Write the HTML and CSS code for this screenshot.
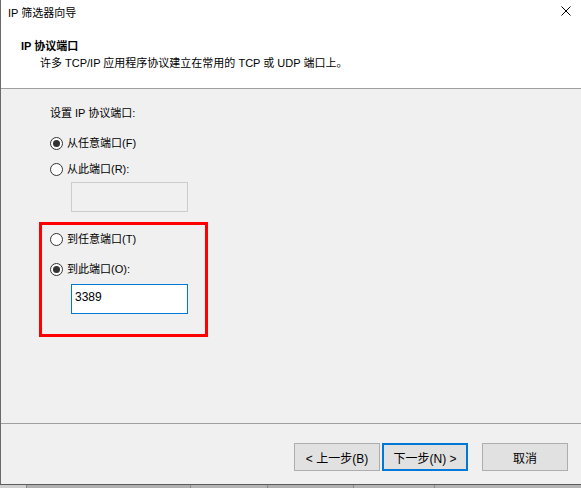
FILE: index.html
```html
<!DOCTYPE html>
<html lang="zh-CN">
<head>
<meta charset="utf-8">
<title>IP 筛选器向导</title>
<link rel="stylesheet" href="styles.css">
</head>
<body>
<div class="window">
  <div class="header">
    <div class="titlebar">
      <span class="title">IP 筛选器向导</span>
      <svg class="close" width="10" height="10" viewBox="0 0 10 10"><path d="M0.5 0.5L9.5 9.5M9.5 0.5L0.5 9.5" stroke="#000" stroke-width="1"/></svg>
    </div>
    <div class="hdr-title">IP 协议端口</div>
    <div class="hdr-sub">许多 TCP/IP 应用程序协议建立在常用的 TCP 或 UDP 端口上。</div>
  </div>
  <div class="content">
    <div class="label">设置 IP 协议端口:</div>
    <div class="radio-row r1"><span class="radio checked"></span><span>从任意端口(F)</span></div>
    <div class="radio-row r2"><span class="radio"></span><span>从此端口(R):</span></div>
    <div class="input disabled"></div>
    <div class="highlight">
      <div class="radio-row r3"><span class="radio"></span><span>到任意端口(T)</span></div>
      <div class="radio-row r4"><span class="radio checked"></span><span>到此端口(O):</span></div>
      <div class="input active">3389</div>
    </div>
  </div>
  <div class="footer">
    <button class="btn">&lt; 上一步(B)</button>
    <button class="btn primary">下一步(N) &gt;</button>
    <button class="btn cancel">取消</button>
  </div>
</div>
<div class="below">
  <span class="seg s1"></span><span class="seg s2"></span><span class="seg s3"></span><span class="seg s4"></span><span class="seg s5"></span>
</div>
</body>
</html>
```
FILE: styles.css
```css
html, body {
  margin: 0;
  padding: 0;
}
body {
  width: 581px;
  height: 488px;
  overflow: hidden;
  background: #b4b4b4;
  font-family: "Liberation Sans", "Noto Sans CJK SC", sans-serif;
  font-size: 11px;
  line-height: 16px;
  color: #000;
}
.window {
  width: 580px;
  height: 484px;
  border-left: 1px solid #6a6a6a;
  border-bottom: 1px solid #5c5c5c;
  display: flex;
  flex-direction: column;
  background: #f0f0f0;
}
.header {
  height: 88px;
  background: #fff;
  border-bottom: 1px solid #a0a0a0;
  flex: none;
}
.titlebar {
  height: 24px;
  display: flex;
  align-items: center;
  justify-content: space-between;
  padding: 0 10px 0 7px;
}
.title {
  line-height: 16px;
  padding-top: 1px;
}
.close {
  display: block;
  margin-top: -2px;
}
.hdr-title {
  font-weight: bold;
  margin-top: 14px;
  padding-left: 20px;
}
.hdr-sub {
  margin-top: 1px;
  padding-left: 39px;
}
.content {
  flex: 1;
  padding: 16px 0 0 49px;
}
.radio-row {
  display: flex;
  align-items: center;
  gap: 4px;
  height: 16px;
}
.r1 { margin-top: 14px; }
.r2 { margin-top: 10px; }
.r3 { margin-top: 0; }
.r4 { margin-top: 14px; }
.radio {
  width: 11px;
  height: 11px;
  border: 1px solid #333;
  border-radius: 50%;
  background: #fff;
  display: flex;
  align-items: center;
  justify-content: center;
  flex: none;
}
.radio.checked::after {
  content: "";
  width: 7px;
  height: 7px;
  border-radius: 50%;
  background: #333;
}
.input {
  box-sizing: border-box;
  width: 117px;
  height: 30px;
  margin-left: 21px;
  padding: 2px 3px;
  line-height: 20px;
  font-size: 12px;
}
.input.disabled {
  margin-top: 5px;
  border: 1px solid #cccccc;
  background: #f0f0f0;
}
.input.active {
  margin-top: 7px;
  border: 1px solid #0078d7;
  background: #fff;
}
.highlight {
  margin: 10px 0 0 -11px;
  width: 155px;
  border: 3px solid #ff0000;
  padding: 6px 0 20px 8px;
  box-sizing: content-box;
}
.highlight .input { margin-left: 21px; }
.footer {
  height: 61px;
  border-top: 1px solid #a0a0a0;
  display: flex;
  align-items: flex-start;
  padding: 19px 13px 0 0;
  justify-content: flex-end;
  box-sizing: border-box;
  flex: none;
}
.btn {
  width: 86px;
  height: 28px;
  border: 1px solid #adadad;
  background: #e1e1e1;
  font-family: inherit;
  font-size: 12px;
  color: #000;
  padding: 0;
  margin: 0;
}
.btn.primary {
  border: 2px solid #0078d7;
  margin-left: 2px;
}
.btn.cancel {
  margin-left: 14px;
}
.below {
  height: 3px;
  display: flex;
}
.seg {
  height: 3px;
  border-right: 1px solid #8a8a8a;
}
.s1 { width: 26px; background: #d0d0d0; }
.s2 { width: 163px; background: #b0b0b0; }
.s3 { width: 76px; background: #b4b4b4; }
.s4 { width: 85px; background: #b0b0b0; }
.s5 { width: 80px; background: #b4b4b4; }
```
